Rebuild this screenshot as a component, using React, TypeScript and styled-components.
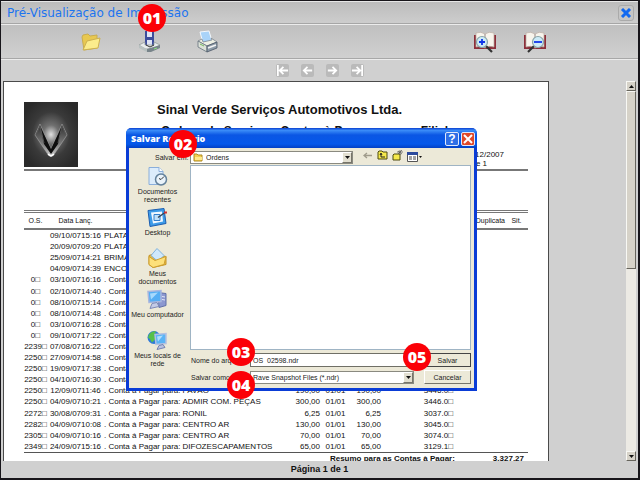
import React from "react";
import styled, { createGlobalStyle } from "styled-components";

const GlobalStyle = createGlobalStyle`
  *, *::before, *::after { box-sizing: border-box; }
  body { margin: 0; background: #17151a; }
  button, input, select { font: inherit; color: inherit; margin: 0; }
`;

const Window = styled.div`
  position: relative;
  display: flex;
  flex-direction: column;
  height: 100vh;
  border: 1px solid #17151a;
  border-right-width: 2px;
  border-bottom-width: 2px;
  background: #d0d0d0;
  color: #111;
  font-family: "Liberation Sans", Arial, sans-serif;
  font-size: 8px;
  overflow: hidden;
`;

const TitleBar = styled.header`
  display: flex;
  align-items: center;
  justify-content: space-between;
  flex: none;
  height: 23px;
  padding: 0 4px 0 6px;
  border-top: 1px solid #e6e6e6;
  border-bottom: 1px solid #a6a6a6;
  background: linear-gradient(#bcbcbc, #cdcdcd);
`;

const Title = styled.h1`
  margin: 0;
  color: #1c74f0;
  font: 12px/20px "DejaVu Sans", Verdana, sans-serif;
  white-space: nowrap;
`;

const IconButton = styled.button<{ $size: number }>`
  display: flex;
  align-items: center;
  justify-content: center;
  width: ${(p) => p.$size}px;
  height: ${(p) => p.$size}px;
  padding: 0;
  border: 0;
  background: none;
`;

const CloseButton = styled(IconButton)`
  border: 1px solid #aaa;
  border-radius: 3px;
  background: #c6c6c6;
`;

const Toolbar = styled.div`
  display: flex;
  align-items: center;
  justify-content: space-between;
  flex: none;
  height: 35px;
  padding: 0 91px 0 78px;
  border-top: 1px solid #ececec;
  border-bottom: 1px solid #a8a8a8;
  background: linear-gradient(#c0c0c0, #d0d0d0);
`;

const ToolGroup = styled.div<{ $gap: number }>`
  display: flex;
  gap: ${(p) => p.$gap}px;
`;

const NavBar = styled.nav`
  display: flex;
  align-items: center;
  justify-content: center;
  gap: 12px;
  flex: none;
  height: 22px;
  border-top: 1px solid #ececec;
`;

const NavButton = styled(IconButton)`
  border-radius: 2px;
  background: #bababa;
`;

const Viewer = styled.main`
  display: flex;
  justify-content: space-between;
  flex: 1;
  min-height: 0;
  padding: 0 2px;
`;

const Paper = styled.article`
  flex: 0 1 546px;
  padding: 20px 20px 0;
  border: solid #4a4a4a;
  border-width: 1px 1px 0 1px;
  background: #fff;
  overflow: hidden;
`;

const PaperHeader = styled.div`
  display: grid;
  grid-template-columns: 54px 1fr;
  height: 69px;
  border-bottom: 2px solid #777;
`;

const Company = styled.div`
  padding: 0 0 0 79px;
`;

const CompanyName = styled.h2`
  margin: 0;
  font-size: 13px;
  line-height: 15px;
  white-space: nowrap;
`;

const ReportName = styled.div`
  display: flex;
  justify-content: space-between;
  margin: 7px 80px 0 4px;
  font-size: 12px;
  font-weight: bold;
  line-height: 14px;
  white-space: nowrap;
`;

const PrintInfo = styled.div`
  display: flex;
  flex-direction: column;
  align-items: flex-end;
  margin: 12px 24px 0 0;
  line-height: 9px;
`;

const PageNumber = styled.span`
  padding-right: 17px;
`;

const FilterBand = styled.div`
  height: 42px;
  border-bottom: 3px double #777;
`;

const Report = styled.table`
  width: 100%;
  height: 240px;
  border-collapse: collapse;
  table-layout: fixed;
  border-bottom: 1px solid #555;
  white-space: nowrap;

  th {
    height: 16px;
    padding: 0;
    border-bottom: 2px solid #777;
    font-size: 7px;
    line-height: 8px;
    font-weight: normal;
  }
  td {
    height: 11px;
    padding: 0;
    line-height: 11px;
  }
`;

const Col = styled.col<{ $w?: number }>`
  width: ${(p) => (p.$w ? p.$w + "px" : "auto")};
`;

const Cell = styled.td<{ $align?: string }>`
  text-align: ${(p) => p.$align || "left"};
`;

const HeadCell = styled.th<{ $align?: string }>`
  text-align: ${(p) => p.$align || "center"};
`;

const Payee = styled.span`
  padding-left: 2px;
`;

const Summary = styled.div`
  display: flex;
  justify-content: flex-end;
  gap: 38px;
  padding: 1px 4px 0 0;
  font-weight: bold;
  line-height: 10px;
`;

const ScrollBar = styled.div`
  display: flex;
  flex-direction: column;
  width: 10px;
  background: #eceae4;
`;

const ScrollPart = styled.button<{ $h: number; $end?: boolean }>`
  display: flex;
  align-items: center;
  justify-content: center;
  width: 10px;
  height: ${(p) => p.$h}px;
  padding: 0;
  margin-top: ${(p) => (p.$end ? "auto" : "0")};
  border: 1px solid;
  border-color: #f8f8f4 #66645c #66645c #f8f8f4;
  background: #d6d2c8;
`;

const StatusBar = styled.footer`
  flex: none;
  height: 17px;
  font: bold 9px/17px "Liberation Sans", Arial, sans-serif;
  text-align: center;
`;

const Dialog = styled.form`
  position: absolute;
  left: 125px;
  top: 127px;
  display: flex;
  flex-direction: column;
  width: 351px;
  border: solid #0a3cd6;
  border-width: 0 3px 3px 3px;
  border-radius: 6px 6px 0 0;
  background: #ece9d8;
  color: #222;
  font-size: 7px;
  line-height: 9px;
`;

const DialogTitle = styled.div`
  display: flex;
  align-items: center;
  gap: 2px;
  height: 20px;
  margin: 0 -3px;
  padding: 2px 2px 0 5px;
  border-radius: 5px 5px 0 0;
  background: linear-gradient(#0a3fd0, #3a8cf8 12%, #0a56e4 35%, #0558ea 80%, #0340c4);
  color: #fff;
  font: bold 9px/14px "Noto Sans", sans-serif;
`;

const DialogName = styled.strong`
  flex: 1;
`;

const CaptionButton = styled(IconButton)<{ $bg: string }>`
  border: 1px solid #dfe8fb;
  border-radius: 2px;
  background: ${(p) => p.$bg};
  color: #fff;
  font: bold 12px/12px "Liberation Sans", sans-serif;
`;

const DialogBody = styled.div`
  display: grid;
  grid-template-columns: 57px 1fr;
  column-gap: 4px;
  padding: 2px 3px 4px 0;
`;

const LookIn = styled.div`
  grid-column: 1 / 3;
  display: flex;
  align-items: center;
  height: 14px;
  margin-bottom: 1px;
`;

const LookLabel = styled.label`
  width: 61px;
  padding-left: 26px;
`;

const Combo = styled.div`
  position: relative;
  height: 13px;
  flex: 0 1 163px;
`;

const Select = styled.select<{ $indent: number }>`
  appearance: none;
  display: block;
  width: 100%;
  height: 100%;
  padding: 0 12px 0 ${(p) => p.$indent}px;
  border: 1px solid #8a8a80;
  border-radius: 0;
  background: #fff;
`;

const ComboArrow = styled.span`
  position: absolute;
  right: 1px;
  top: 1px;
  bottom: 1px;
  width: 10px;
  display: flex;
  align-items: center;
  justify-content: center;
  border: 1px solid;
  border-color: #fff #77756a #77756a #fff;
  background: #e2dfd0;
  pointer-events: none;
`;

const ComboIcon = styled.span`
  position: absolute;
  left: 3px;
  top: 1px;
  display: flex;
  pointer-events: none;
`;

const LookTools = styled.div`
  display: flex;
  gap: 4px;
  padding-left: 9px;
`;

const Places = styled.div`
  display: grid;
  grid-auto-rows: 41px;
  align-content: start;
  padding-top: 1px;
`;

const Place = styled.button`
  display: flex;
  flex-direction: column;
  align-items: center;
  padding: 0;
  border: 0;
  background: none;
  line-height: 8px;
  text-align: center;
  svg { margin-bottom: 1px; flex: none; }
`;

const FilePane = styled.div`
  display: flex;
  flex-direction: column;
`;

const FileList = styled.div`
  height: 185px;
  border: 1px solid #9fb4c4;
  background: #fff;
`;

const Fields = styled.div`
  display: grid;
  grid-template-columns: 60px 1fr 47px;
  row-gap: 3px;
  align-items: center;
  padding-top: 3px;
`;

const FieldLabel = styled.label`
  padding-left: 1px;
  white-space: nowrap;
`;

const TextInput = styled.input`
  width: calc(100% - 10px);
  height: 14px;
  padding: 0 2px;
  border: 1px solid #6f6f66;
  background: #fff;
`;

const TypeCombo = styled(Combo)`
  height: 13px;
  margin-right: 10px;
`;

const PushButton = styled.button<{ $primary?: boolean }>`
  height: 14px;
  padding: 0;
  border: 1px solid;
  border-color: ${(p) => (p.$primary ? "#444" : "#fff #77756a #77756a #fff")};
  background: #ece9d8;
`;

const Marker = styled.span<{ $x: number; $y: number }>`
  position: absolute;
  left: ${(p) => p.$x}px;
  top: ${(p) => p.$y}px;
  width: 28px;
  height: 28px;
  border-radius: 50%;
  background: #fb0007;
  color: #fff;
  font: 800 16px/28px "Open Sans", sans-serif;
  text-align: center;
`;

const FolderIcon = ({ size }: { size: number }) => (
  <svg width={size} height={size} viewBox="0 0 20 20">
    <path d="M1 5l1-2 5-1 2 2 7-1v13L3 18z" fill="#e8c850" stroke="#c8ac50" />
    <path d="M2 18L6 9l13-3-2 10z" fill="#fbec8c" stroke="#ccb050" />
  </svg>
);

const SmallFolder = () => (
  <svg width="10" height="10" viewBox="0 0 10 10">
    <path d="M1 2h3l1 1h4v6H1z" fill="#f4cf50" stroke="#b08a20" />
    <path d="M2 5h7v3H2z" fill="#fde98a" />
  </svg>
);

const DiskIcon = () => (
  <svg width="24" height="24" viewBox="0 0 24 24">
    <path d="M8 1h9v15H8z" fill="#3c4c9c" />
    <path d="M10 1h5v6h-5zM10 10h5v6h-5z" fill="#dfe4f4" />
    <path d="M2 15l6-3v3h9v-3l6 3-7 4H8z" fill="#e9ecec" stroke="#8b9494" strokeWidth=".7" />
    <path d="M2 15l8 4v3l-8-4z" fill="#b8c0c0" />
    <path d="M10 19l13-4v3l-9 4h-4z" fill="#78848a" />
    <path d="M9 15l4 2 4-2" fill="none" stroke="#333" />
    <path d="M17 19l3-1" stroke="#8be07a" />
  </svg>
);

const PrinterIcon = () => (
  <svg width="24" height="24" viewBox="0 0 24 24">
    <path d="M5 2l9-1 3 10-9 2z" fill="#a9d3f8" stroke="#f4f8fc" />
    <path d="M3 11l4-2 1 3 9-2-1-2 6 4-10 4z" fill="#eef0e4" stroke="#7c8690" strokeWidth=".8" />
    <path d="M3 11l9 5v6l-9-5z" fill="#dce2d8" stroke="#66727e" strokeWidth=".8" />
    <path d="M12 16l10-4v6l-10 4z" fill="#8e9ca8" stroke="#4a5666" strokeWidth=".8" />
    <path d="M13 18l8-3" stroke="#f4f4f4" strokeWidth="1.4" />
    <path d="M5 14l4 2" stroke="#73b85c" />
  </svg>
);

const BookIcon = ({ minus }: { minus?: boolean }) => (
  <svg width="24" height="24" viewBox="0 0 24 24">
    <path d="M1 5h22v14H1z" fill="#8c2f3a" />
    <path d="M3 3q5-2 9 1 4-3 9-1v14q-5-2-9 1-4-3-9-1z" fill="#f7f4ec" stroke="#b9a9a0" strokeWidth=".7" />
    <path d="M12 4v14" stroke="#9a8a88" />
    <g transform={minus ? "translate(24 0) scale(-1 1)" : undefined}>
      <path d="M13 16l6 6" stroke="#333" strokeWidth="2.2" />
      <circle cx="9" cy="12" r="5.5" fill="#ccebf7" stroke="#8aa4a8" strokeWidth="1.2" />
      <path d={minus ? "M5 12h8" : "M6 12h6M9 9v6"} stroke="#1034e8" strokeWidth="1.8" />
    </g>
  </svg>
);

const arrows: Record<string, string> = {
  Primeira: "M2 1v12M13 7H4M8 3L4 7l4 4",
  Anterior: "M12 7H3M7 3L3 7l4 4",
  "Próxima": "M2 7h9M7 3l4 4-4 4",
  "Última": "M12 1v12M1 7h9M6 3l4 4-4 4",
};

const ArrowIcon = ({ d }: { d: string }) => (
  <svg width="13" height="13" viewBox="0 0 14 14">
    <path d={d} fill="none" stroke="#fff" strokeWidth="1.9" />
  </svg>
);

const Triangle = ({ up }: { up?: boolean }) => (
  <svg width="5" height="3" viewBox="0 0 5 3">
    <path d={up ? "M0 3L2.500 0 5 3z" : "M0 0h5L2.500 3z"} fill="#111" />
  </svg>
);

const Logo = () => (
  <svg width="54" height="65" viewBox="0 0 54 65">
    <defs>
      <radialGradient id="glow" cx="50%" cy="50%" r="58%">
        <stop offset="0" stopColor="#e0e0e0" />
        <stop offset=".25" stopColor="#707070" />
        <stop offset=".6" stopColor="#3a3a3a" />
        <stop offset="1" stopColor="#2a2a2a" />
      </radialGradient>
      <linearGradient id="metal" x1="0" y1="0" x2="0" y2="1">
        <stop offset="0" stopColor="#2a2a2a" />
        <stop offset=".6" stopColor="#777" />
        <stop offset="1" stopColor="#ccc" />
      </linearGradient>
    </defs>
    <path d="M0 0h54v65H0z" fill="url(#glow)" />
    <path d="M16 22l11 25 11-25 5 11-14 21h-4L11 33z" fill="url(#metal)" stroke="#a8a8a8" strokeWidth=".6" />
    <path d="M16 24l11 23 11-23-4 18-7 10-7-10z" fill="#0e0e0e" />
    <path d="M12 33l4-9 4 17M42 33l-4-9-4 17" fill="none" stroke="#555" />
    <path d="M24 52l3 2 3-2" fill="none" stroke="#fff" strokeWidth="1.5" />
  </svg>
);

const placeArt: Record<string, React.ReactNode> = {
  recent: (
    <>
      <path d="M2 1h10l4 4v13H2z" fill="#dcecfb" stroke="#8aaedb" />
      <path d="M12 1v4h4" fill="#fff" stroke="#8aaedb" />
      <circle cx="14" cy="13" r="5.500" fill="#eaf3fa" stroke="#64829c" strokeWidth="1.5" />
      <path d="M14 13l3-3M14 13l-2-1" stroke="#333" />
    </>
  ),
  desktop: (
    <>
      <path d="M1 3l16-2 2 15-16 3z" fill="#3d9be8" stroke="#1c5eb0" />
      <path d="M4 5l11-1 1 10-10 2z" fill="#f1f8ff" />
      <path d="M7 7h6v6H7z" fill="#bfe0fa" stroke="#3680cc" />
      <path d="M11 10l7-5" stroke="#345" strokeWidth="1.5" />
      <path d="M17 5h3" stroke="#c33" strokeWidth="2" />
    </>
  ),
  docs: (
    <>
      <path d="M2 7l3-1 14 2v8L6 19 2 16z" fill="#ebbd45" stroke="#c39224" />
      <path d="M10 0l7 7-6 6-7-6z" fill="#cfe8fb" stroke="#7fb2de" />
      <path d="M2 8l6 4 11-4-2 8-11 3-4-3z" fill="#fde07a" stroke="#cfa030" />
    </>
  ),
  computer: (
    <>
      <path d="M11 3l8 1v12l-7 2z" fill="#8c98d0" stroke="#6272a8" />
      <path d="M15 7l3 .5M15 10l3 .5" stroke="#e4e8f8" />
      <path d="M1 2l13-1v11L2 13z" fill="#55aef4" stroke="#a9b6de" strokeWidth="1.5" />
      <path d="M3 4l8-1-7 7z" fill="#a7d9fc" />
      <path d="M5 14l5-1 2 4-9 2z" fill="#c3cbe6" stroke="#7d8ab8" />
    </>
  ),
  network: (
    <>
      <circle cx="7" cy="7" r="6.500" fill="#2f7ad8" />
      <path d="M2 4q3-4 7-3l-2 4 2 3-4 4q-2-4-4-5z" fill="#57c04a" />
      <path d="M8 4l11-1v10l-10 1z" fill="#5bb4f6" stroke="#b4c0e0" strokeWidth="1.500" />
      <path d="M10 6l6-1-5 6z" fill="#b2defc" />
      <path d="M12 15l4-1 2 3-8 2z" fill="#b9c3e2" stroke="#7482b2" />
    </>
  ),
};

const places: [string, string][] = [
  ["recent", "Documentos recentes"],
  ["desktop", "Desktop"],
  ["docs", "Meus documentos"],
  ["computer", "Meu computador"],
  ["network", "Meus locais de rede"],
];

type Row = [string, string, string, string?, string?, string?];
const pay = ". Conta á Pagar para:";
const rows: Row[] = [
  ["", "09/10/0715:16", "PLATA"],
  ["", "20/09/0709:20", "PLATA"],
  ["", "25/09/0714:21", "BRIMA"],
  ["", "04/09/0714:39", "ENCO"],
  ["0□", "03/10/0716:16", ". Conta"],
  ["0□", "02/10/0714:40", ". Conta"],
  ["0□", "08/10/0715:14", ". Conta"],
  ["0□", "08/10/0714:48", ". Conta"],
  ["0□", "03/10/0716:28", ". Conta"],
  ["0□", "09/10/0717:22", ". Conta"],
  ["2239□", "07/08/0716:22", ". Conta"],
  ["2250□", "27/09/0714:58", ". Conta"],
  ["2250□", "19/09/0717:38", ". Conta"],
  ["2250□", "04/10/0716:30", ". Conta"],
  ["2250□", "12/09/0711:46", pay, "PAVÃO", "190,00", "3446.0□"],
  ["2250□", "04/09/0710:21", pay, "ADMIR COM. PEÇAS", "300,00", "3446.0□"],
  ["2272□", "30/08/0709:31", pay, "RONIL", "6,25", "3037.0□"],
  ["2282□", "04/09/0710:08", pay, "CENTRO AR", "130,00", "3045.0□"],
  ["2305□", "04/09/0710:16", pay, "CENTRO AR", "70,00", "3074.0□"],
  ["2349□", "24/09/0715:16", pay, "DIFOZESCAPAMENTOS", "65,00", "3129.1□"],
];

export default function App() {
  return (
    <>
      <GlobalStyle />
      <Window>
        <TitleBar>
          <Title>Pré-Visualização de Impressão</Title>
          <CloseButton $size={16} aria-label="Fechar">
            <svg width="12" height="10" viewBox="0 0 12 10">
              <path d="M2 1l8 8M10 1L2 9" stroke="#1269f0" strokeWidth="3" />
            </svg>
          </CloseButton>
        </TitleBar>
        <Toolbar>
          <ToolGroup $gap={34}>
            <IconButton $size={24} aria-label="Abrir"><FolderIcon size={20} /></IconButton>
            <IconButton $size={24} aria-label="Salvar relatório"><DiskIcon /></IconButton>
            <IconButton $size={24} aria-label="Imprimir"><PrinterIcon /></IconButton>
          </ToolGroup>
          <ToolGroup $gap={26}>
            <IconButton $size={24} aria-label="Aumentar zoom"><BookIcon /></IconButton>
            <IconButton $size={24} aria-label="Diminuir zoom"><BookIcon minus /></IconButton>
          </ToolGroup>
        </Toolbar>
        <NavBar>
          {Object.keys(arrows).map((name) => (
            <NavButton key={name} $size={13} aria-label={name}><ArrowIcon d={arrows[name]} /></NavButton>
          ))}
        </NavBar>
        <Viewer>
          <Paper>
            <PaperHeader>
              <Logo />
              <Company>
                <CompanyName>Sinal Verde Serviços Automotivos Ltda.</CompanyName>
                <ReportName><span>Ordens de Serviço e Contas à Pagar</span><span>Filial</span></ReportName>
                <PrintInfo>
                  <span>12/2007</span>
                  <PageNumber>e 1</PageNumber>
                </PrintInfo>
              </Company>
            </PaperHeader>
            <FilterBand />
            <Report>
              <colgroup>
                <Col $w={23} /><Col $w={57} /><Col /><Col $w={40} /><Col $w={31} />
                <Col $w={30} /><Col $w={72} /><Col $w={52} /><Col $w={23} />
              </colgroup>
              <thead>
                <tr>
                  <HeadCell>O.S.</HeadCell>
                  <HeadCell>Data Lanç.</HeadCell>
                  <HeadCell /><HeadCell /><HeadCell /><HeadCell /><HeadCell />
                  <HeadCell $align="right">Duplicata</HeadCell>
                  <HeadCell>Sit.</HeadCell>
                </tr>
              </thead>
              <tbody>
                {rows.map(([os, date, text, payee, value, doc], i) => (
                  <tr key={i}>
                    <Cell $align="center">{os}</Cell>
                    <Cell $align="center">{date}</Cell>
                    <Cell>{text}{payee && <Payee>{payee}</Payee>}</Cell>
                    <Cell $align="right">{value}</Cell>
                    <Cell $align="center">{value && "01/01"}</Cell>
                    <Cell $align="right">{value}</Cell>
                    <Cell $align="right">{doc}</Cell>
                    <Cell />
                    <Cell />
                  </tr>
                ))}
              </tbody>
            </Report>
            <Summary><span>Resumo para as Contas à Pagar:</span><span>3.327,27</span></Summary>
          </Paper>
          <ScrollBar>
            <ScrollPart $h={10} aria-label="Rolar para cima"><Triangle up /></ScrollPart>
            <ScrollPart $h={178} aria-label="Posição" />
            <ScrollPart $h={10} $end aria-label="Rolar para baixo"><Triangle /></ScrollPart>
          </ScrollBar>
        </Viewer>
        <StatusBar>Página 1 de 1</StatusBar>

        <Dialog onSubmit={(e) => e.preventDefault()}>
          <DialogTitle>
            <DialogName>Salvar Relatório</DialogName>
            <CaptionButton type="button" $size={14} $bg="#2f6fe6" aria-label="Ajuda">?</CaptionButton>
            <CaptionButton type="button" $size={14} $bg="#e0492a" aria-label="Fechar diálogo">
              <svg width="10" height="10" viewBox="0 0 10 10">
                <path d="M1 1l8 8M9 1L1 9" stroke="#fff" strokeWidth="2" />
              </svg>
            </CaptionButton>
          </DialogTitle>
          <DialogBody>
            <LookIn>
              <LookLabel htmlFor="folder">Salvar em:</LookLabel>
              <Combo>
                <Select id="folder" $indent={15}><option>Ordens</option></Select>
                <ComboIcon><SmallFolder /></ComboIcon>
                <ComboArrow><Triangle /></ComboArrow>
              </Combo>
              <LookTools>
                <IconButton type="button" $size={11} aria-label="Voltar">
                  <svg width="9" height="9" viewBox="0 0 9 9"><path d="M9 4.500H2M4 2L1 4.500 4 7" fill="none" stroke="#a09c8c" strokeWidth="1.300" /></svg>
                </IconButton>
                <IconButton type="button" $size={11} aria-label="Um nível acima">
                  <svg width="11" height="10" viewBox="0 0 11 10">
                    <path d="M1 9V2l1-1h3l1 1h4v7z" fill="#f6ea4c" stroke="#4c4a10" />
                    <path d="M4 4v3h4M3 5l1-2 1 2" fill="none" stroke="#222" />
                  </svg>
                </IconButton>
                <IconButton type="button" $size={11} aria-label="Nova pasta">
                  <svg width="11" height="11" viewBox="0 0 11 11">
                    <path d="M1 10V5l1-1h6v6z" fill="#f6ea4c" stroke="#4c4a10" />
                    <path d="M8 0v5M5 2h6M6 1l4 3M10 0L6 4" stroke="#555" strokeWidth=".7" />
                  </svg>
                </IconButton>
                <IconButton type="button" $size={15} aria-label="Exibir">
                  <svg width="15" height="10" viewBox="0 0 15 10">
                    <path d="M.5.5h10v9H.5z" fill="#fff" stroke="#555" />
                    <path d="M0 0h11v3H0z" fill="#2c4a9c" />
                    <path d="M2 5h3M2 7h3M6 5h3M6 7h3" stroke="#444" />
                    <path d="M12 4h3l-1.500 2z" fill="#111" />
                  </svg>
                </IconButton>
              </LookTools>
            </LookIn>
            <Places>
              {places.map(([id, name]) => (
                <Place type="button" key={id}>
                  <svg width="21" height="21" viewBox="0 0 21 20">{placeArt[id]}</svg>
                  {name}
                </Place>
              ))}
            </Places>
            <FilePane>
              <FileList />
              <Fields>
                <FieldLabel htmlFor="file">Nome do arquivo:</FieldLabel>
                <TextInput id="file" defaultValue="OS_02598.ndr" />
                <PushButton $primary type="submit">Salvar</PushButton>
                <FieldLabel htmlFor="type">Salvar como tipo:</FieldLabel>
                <TypeCombo>
                  <Select id="type" $indent={2}><option>Rave Snapshot Files (*.ndr)</option></Select>
                  <ComboArrow><Triangle /></ComboArrow>
                </TypeCombo>
                <PushButton type="button">Cancelar</PushButton>
              </Fields>
            </FilePane>
          </DialogBody>
        </Dialog>

        <Marker $x={137} $y={3}>01</Marker>
        <Marker $x={168} $y={129}>02</Marker>
        <Marker $x={226} $y={337}>03</Marker>
        <Marker $x={226} $y={370}>04</Marker>
        <Marker $x={402} $y={342}>05</Marker>
      </Window>
    </>
  );
}
